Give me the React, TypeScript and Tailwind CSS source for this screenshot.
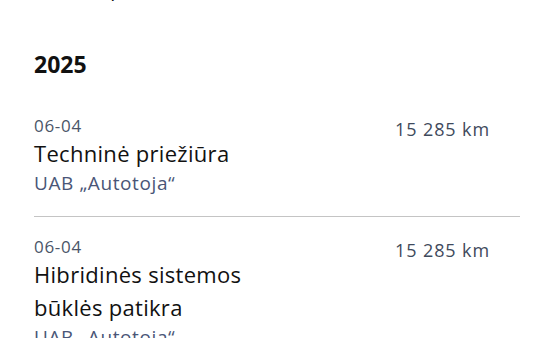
const entries = [
  { date: "06-04", title: ["Techninė priežiūra"], company: "UAB „Autotoja“", km: "15 285 km" },
  { date: "06-04", title: ["Hibridinės sistemos", "būklės patikra"], company: "UAB „Autotoja“", km: "15 285 km" },
];

const Entry = ({ e, last }: { e: (typeof entries)[number]; last: boolean }) => (
  <div className={`flex justify-between pr-[30px] pt-[19px] pb-[20px] ${last ? "" : "border-b border-[#c4c4c4]"}`}>
    <div className="flex flex-col">
      <p className="text-[17px] leading-[22px] tracking-[0.7px] text-[#4b5568]">{e.date}</p>
      <p className="text-[22px] leading-[33px] tracking-[0.3px] text-[#111111]">
        {e.title.map((t) => (
          <span key={t} className="block">{t}</span>
        ))}
      </p>
      <p className="text-[19px] leading-[26px] tracking-[0.6px] text-[#4a5677]">{e.company}</p>
    </div>
    <p className="shrink-0 whitespace-nowrap text-[18px] leading-[24px] tracking-[0.9px] text-[#3f4a5c] w-[95px] pt-[2px]">
      {e.km}
    </p>
  </div>
);

export default function App() {
  return (
    <div className="w-[554px] h-[338px] overflow-hidden bg-white px-[34px]" style={{ fontFamily: '"Open Sans", "Noto Sans", sans-serif' }}>
      <div className="h-[5px] overflow-hidden">
        <p className="-mt-[25px] -ml-[7px] text-[20px] leading-[28px] text-[#111111]">Serviso apžiūros</p>
      </div>
      <h2 className="mt-[43px] text-[23px] leading-[32px] font-bold text-[#111111]">2025</h2>
      <div className="mt-[16px]">
        {entries.map((e, i) => (
          <Entry key={i} e={e} last={i === entries.length - 1} />
        ))}
      </div>
    </div>
  );
}
